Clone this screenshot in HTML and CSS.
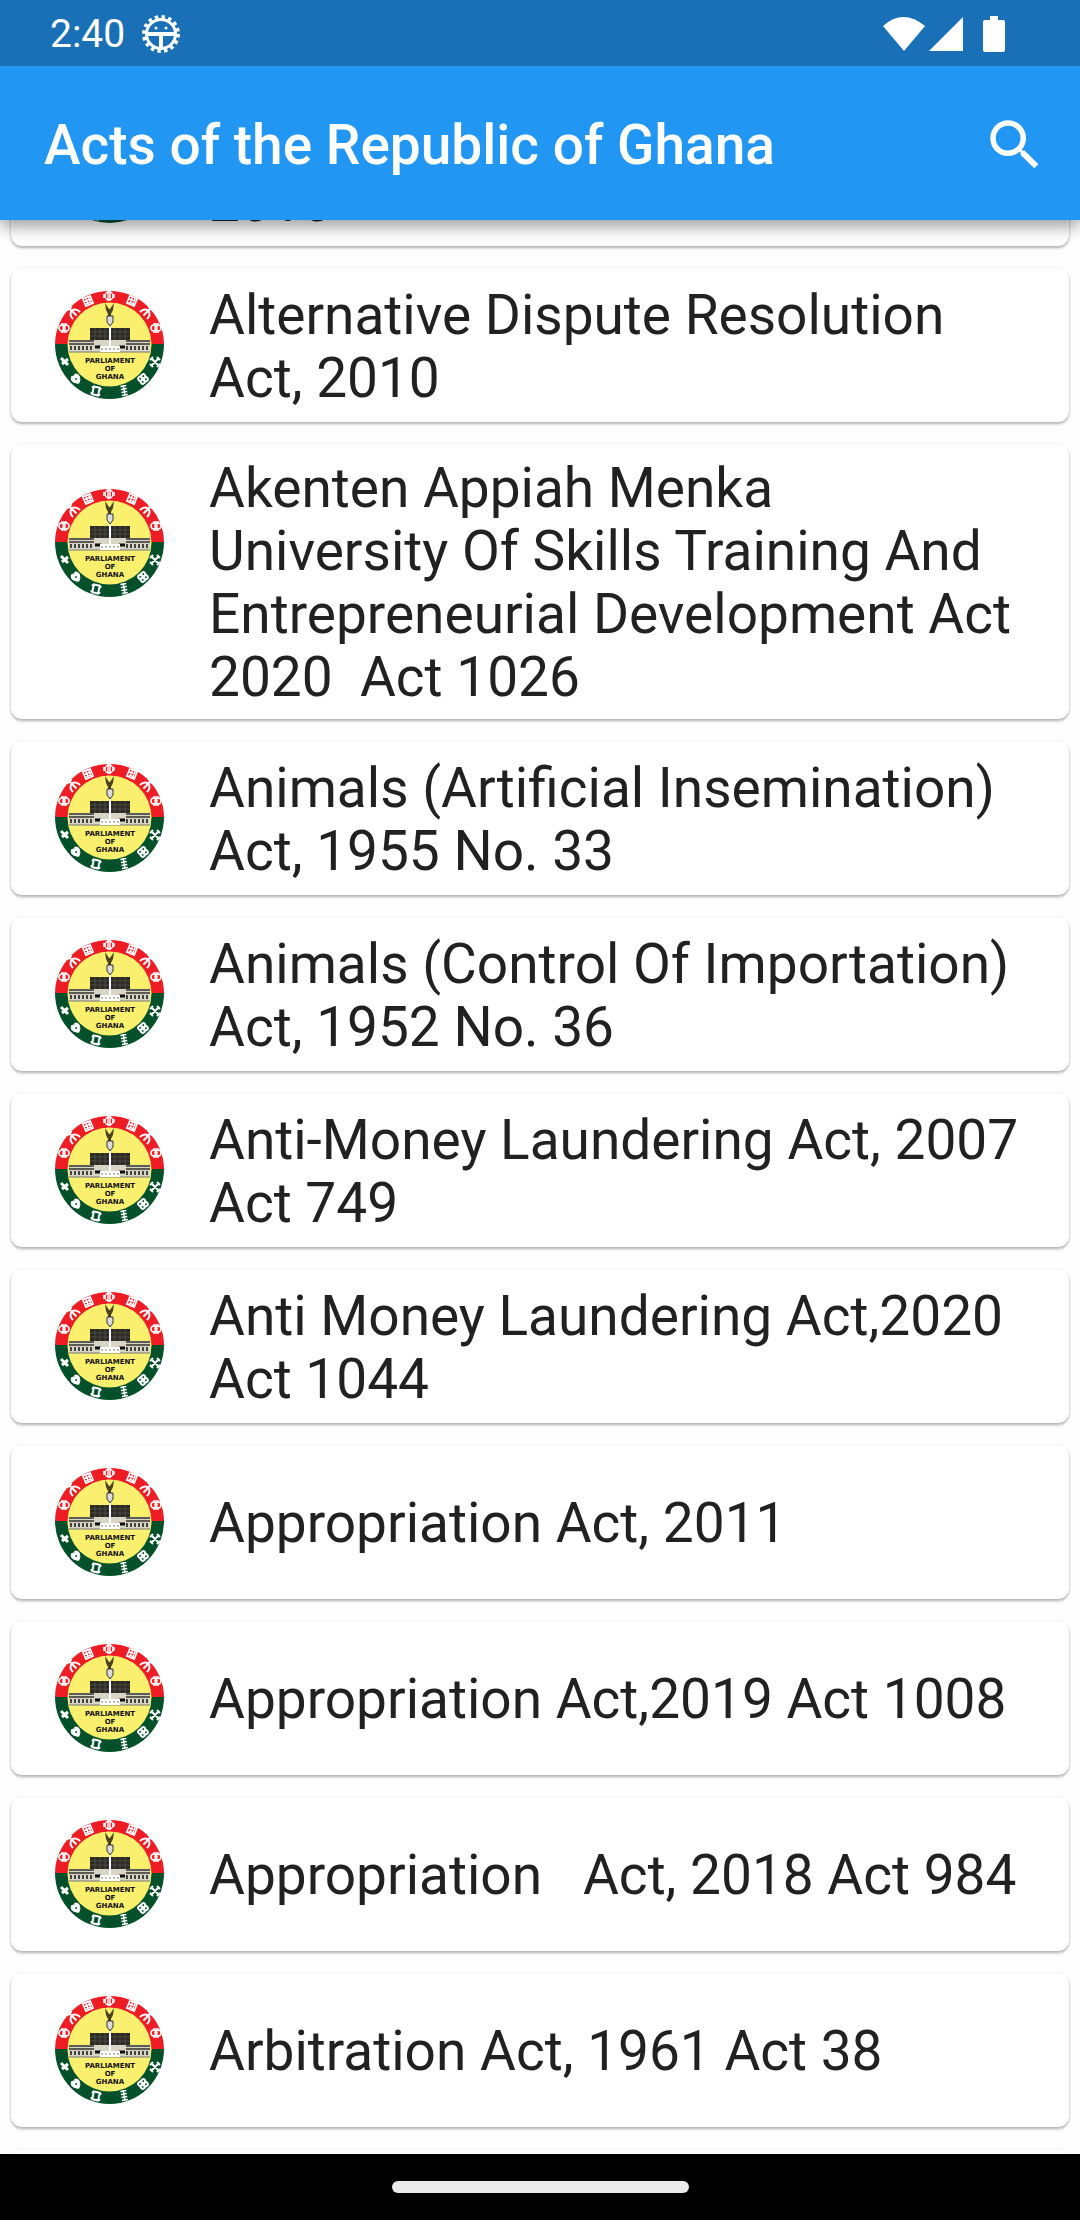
FILE: index.html
```
<!DOCTYPE html>
<html lang="en">
<head>
  <meta charset="UTF-8" />
  <meta name="viewport" content="width=device-width, initial-scale=1.0"/>
  <title>Acts of the Republic of Ghana</title>
  <link rel="stylesheet" href="styles.css">
</head>
<body>
  <!-- Parliament seal, reused by every card -->
  <svg class="defs" aria-hidden="true">
    <symbol id="seal" viewBox="0 0 110 110">
      <path d="M0 54.500a54.500 53.500 0 0 1 109 0z" fill="#ee1c25"/>
      <path d="M0 54a54.500 55 0 0 0 109 0z" fill="#04502a"/>
      <circle cx="54.500" cy="54.500" r="42" fill="#faf06e"/>
      <!-- adinkra symbols in the red half -->
      <g fill="none" stroke="#fff" stroke-width="1.500">
        <g transform="translate(54 6)"><circle r="4"/><path d="M-1-5v10M1-5v10M-5-2v4M5-2v4"/></g>
        <g transform="translate(33 11) rotate(-22)"><path d="M-4-4h8v8h-8zM-4-1h8M-4 2h8M-1-4v8M2-4v8"/></g>
        <g transform="translate(77 11) rotate(22)"><path d="M-4-4h8v8h-8zM-4-1h8M-4 2h8M-1-4v8M2-4v8"/></g>
        <g transform="translate(18 22) rotate(-45)" stroke-width="2"><path d="M0-6v11M-5 5q0-6 5-7q5 1 5 7M-3-5h6"/></g>
        <g transform="translate(92 22) rotate(45)" stroke-width="2"><path d="M0-6v11M-5 5q0-6 5-7q5 1 5 7M-3-5h6"/></g>
        <g transform="translate(9 38)"><circle cx="-2" r="3"/><circle cx="2" r="3"/><path d="M-3-4h6M-3 4h6"/></g>
        <g transform="translate(101 38)"><circle cx="-2" r="3"/><circle cx="2" r="3"/><path d="M-3-4h6M-3 4h6"/></g>
      </g>
      <!-- and in the green half -->
      <g fill="none" stroke="#fff" stroke-width="2">
        <path d="M6 68l7 7M13 69l-6 5" stroke-width="3"/>
        <path d="M96 68l8 8M104 68l-8 8M95 70l3-3M102 67l3 3M95 74l3 3M102 77l3-3"/>
        <g transform="translate(88 89) rotate(-40)"><circle cx="-2" cy="-2" r="2"/><circle cx="2" cy="-2" r="2"/><circle cx="-2" cy="2" r="2"/><circle cx="2" cy="2" r="2"/></g>
        <g transform="translate(41 101) rotate(12)"><path d="M-3-4h6v8h-6zM-4-4v2M4-4v2M-4 4v-2M4 4v-2"/></g>
        <g transform="translate(69 100) rotate(-10)"><path d="M0-5v10M-3-4h6M-3-1h6M-3 2h6M-3 5h6" stroke-width="1.500"/></g>
        <g transform="translate(21 89) rotate(-35)"><path d="M0 5c-5-3-5-7-3-9q2-1 3 1q1-2 3-1c2 2 2 6-3 9z" fill="#fff" stroke-width="1"/><circle r="1" fill="#04502a" stroke="none"/></g>
      </g>
      <!-- eagle and staff -->
      <path d="M50 13l4 6h1l4-6-1 7-2 4v3h-3v-3l-2-4z" fill="#4a4520"/>
      <path d="M52 26h6v6l-3 4-3-4z" fill="#ddd" stroke="#333"/>
      <!-- parliament house -->
      <path d="M35 38h40v17H35z" fill="#2b2a26"/>
      <path d="M35 42h40M35 46h40M40 38v12M45 38v12M50 38v12M60 38v12M65 38v12M70 38v12" stroke="#4b4a40" fill="none"/>
      <path d="M14 50h81v12H14z" fill="#d8d5c4"/>
      <path d="M14 51h25M71 51h24M14 54h25M71 54h24" stroke="#333" stroke-width="1.500"/>
      <path d="M15 58h24M71 58h24" stroke="#444" stroke-width="4" stroke-dasharray="2 2"/>
      <path d="M14 62h81" stroke="#777"/>
      <path d="M40 57h6M64 57h6" stroke="#111" stroke-width="3"/>
      <path d="M45 56h20v6H45z" fill="#fff"/>
      <path d="M46 59h18" stroke="#777" stroke-dasharray="2 2"/>
      <path d="M55 36v20" stroke="#fff" stroke-width="2"/>
      <text class="seal-text" x="55" y="73">PARLIAMENT</text>
      <text class="seal-text" x="55" y="81">OF</text>
      <text class="seal-text" x="55" y="89">GHANA</text>
    </symbol>
  </svg>

  <div class="status-bar">
    <span class="time">2:40</span>
    <svg class="gear" viewBox="0 0 40 40" aria-hidden="true">
      <circle cx="20" cy="20" r="17" fill="none" stroke="#fff" stroke-width="4" stroke-dasharray="3.400 3.276"/>
      <circle cx="20" cy="20" r="14.500" fill="none" stroke="#fff" stroke-width="3"/>
      <path d="M7 20h26M20 20v14" stroke="#fff" stroke-width="4"/>
      <circle cx="15" cy="14" r="1.500" fill="#fff"/>
      <circle cx="25" cy="14" r="1.500" fill="#fff"/>
    </svg>
    <div class="status-icons">
      <svg width="42" height="36" viewBox="0 0 42 36"><path d="M0 10Q20-8 42 10L21 35z" fill="#fff"/></svg>
      <svg width="34" height="36" viewBox="0 0 34 36"><path d="M34 1v34H0z" fill="#fff"/></svg>
      <svg class="battery" width="22" height="36" viewBox="0 0 22 36"><path d="M7 0h8v4h5q2 0 2 2v28q0 2-2 2H2q-2 0-2-2V6q0-2 2-2h5z" fill="#fff"/></svg>
    </div>
  </div>

  <header>
    <h1>Acts of the Republic of Ghana</h1>
    <button class="search" aria-label="Search">
      <svg viewBox="0 0 24 24"><path fill="#fff" d="M15.5 14h-.79l-.28-.27C15.41 12.59 16 11.11 16 9.5 16 5.91 13.09 3 9.5 3S3 5.91 3 9.5 5.91 16 9.5 16c1.61 0 3.09-.59 4.23-1.57l.27.28v.79l5 4.99L20.49 19l-4.99-5zm-6 0C7.01 14 5 11.99 5 9.5S7.01 5 9.5 5 14 7.01 14 9.5 11.99 14 9.5 14z"/></svg>
    </button>
  </header>

  <main id="acts">
    <ul class="act-list">
      <li class="card"><svg class="seal"><use href="#seal"/></svg><p><br>2010</p></li>
      <li class="card"><svg class="seal"><use href="#seal"/></svg><p>Alternative Dispute Resolution Act, 2010</p></li>
      <li class="card tall"><svg class="seal"><use href="#seal"/></svg><p>Akenten Appiah Menka University Of Skills Training And Entrepreneurial Development Act 2020  Act 1026</p></li>
      <li class="card"><svg class="seal"><use href="#seal"/></svg><p>Animals (Artificial Insemination) Act, 1955 No. 33</p></li>
      <li class="card"><svg class="seal"><use href="#seal"/></svg><p>Animals (Control Of Importation) Act, 1952 No. 36</p></li>
      <li class="card"><svg class="seal"><use href="#seal"/></svg><p>Anti-Money Laundering Act, 2007 Act 749</p></li>
      <li class="card"><svg class="seal"><use href="#seal"/></svg><p>Anti Money Laundering Act,2020 Act 1044</p></li>
      <li class="card"><svg class="seal"><use href="#seal"/></svg><p>Appropriation Act, 2011</p></li>
      <li class="card"><svg class="seal"><use href="#seal"/></svg><p>Appropriation Act,2019 Act 1008</p></li>
      <li class="card"><svg class="seal"><use href="#seal"/></svg><p>Appropriation   Act, 2018 Act 984</p></li>
      <li class="card"><svg class="seal"><use href="#seal"/></svg><p>Arbitration Act, 1961 Act 38</p></li>
      <li class="card"></li>
    </ul>
  </main>

  <footer>
    <div class="home-pill"></div>
  </footer>

  <script>
    // start part way down the list
    document.getElementById('acts').scrollTop = 139;
  </script>
</body>
</html>
```
FILE: styles.css
```
:root {
  --primary: #2196f3;
  --primary-dark: #1a70b6;
  --text: #212121;
}
* {
  box-sizing: border-box;
}
body {
  margin: 0;
  height: 100vh;
  display: flex;
  flex-direction: column;
  font-family: Roboto, 'Liberation Sans', sans-serif;
  background: #fefefe;
  color: var(--text);
}
.defs {
  position: absolute;
  width: 0;
  height: 0;
}

.status-bar {
  flex: none;
  display: flex;
  align-items: center;
  height: 66px;
  padding: 2px 75px 0 50px;
  background: var(--primary-dark);
  color: #fff;
  z-index: 11;
}
.time {
  font-size: 39px;
}
.gear {
  width: 40px;
  height: 40px;
  margin-left: 16px;
}
.status-icons {
  display: flex;
  gap: 4px;
  margin-left: auto;
}
.battery {
  margin-left: 16px;
}

header {
  flex: none;
  display: flex;
  justify-content: space-between;
  align-items: center;
  height: 154px;
  padding: 3px 32px 0 44px;
  background: var(--primary);
  color: #fff;
  box-shadow: 0 6px 16px rgba(0,0,0,0.4);
  z-index: 10;
}
header h1 {
  margin: 0;
  font-size: 55px;
  font-weight: 500;
}
.search {
  width: 66px;
  height: 66px;
  padding: 0;
  border: none;
  background: none;
  cursor: pointer;
}
.search svg {
  display: block;
}

main {
  flex: 1;
  min-height: 0;
  overflow-y: auto;
  scrollbar-width: none;
}
.act-list {
  display: flex;
  flex-direction: column;
  gap: 22px;
  margin: 0;
  padding: 11px;
  list-style: none;
}
.card {
  flex: none;
  display: flex;
  align-items: center;
  gap: 44px;
  min-height: 154px;
  padding: 9px 44px 10px;
  border-radius: 11px;
  background: #fff;
  box-shadow: 0 2px 3px rgba(0,0,0,0.3), 0 0 2px rgba(0,0,0,0.08);
}
.card p {
  margin: 0;
  padding-top: 4px;
  font-size: 55px;
  line-height: 63px;
  white-space: pre-wrap;
}
.seal {
  flex: none;
  width: 110px;
  height: 110px;
}
.tall .seal {
  align-self: flex-start;
  margin-top: 35px;
}
.seal-text {
  font: bold 7px 'DejaVu Sans', sans-serif;
  text-anchor: middle;
  fill: #111;
}

footer {
  flex: none;
  display: flex;
  justify-content: center;
  align-items: center;
  height: 66px;
  background: #000;
  z-index: 10;
}
.home-pill {
  width: 297px;
  height: 12px;
  border-radius: 6px;
  background: #ebebeb;
}
```
